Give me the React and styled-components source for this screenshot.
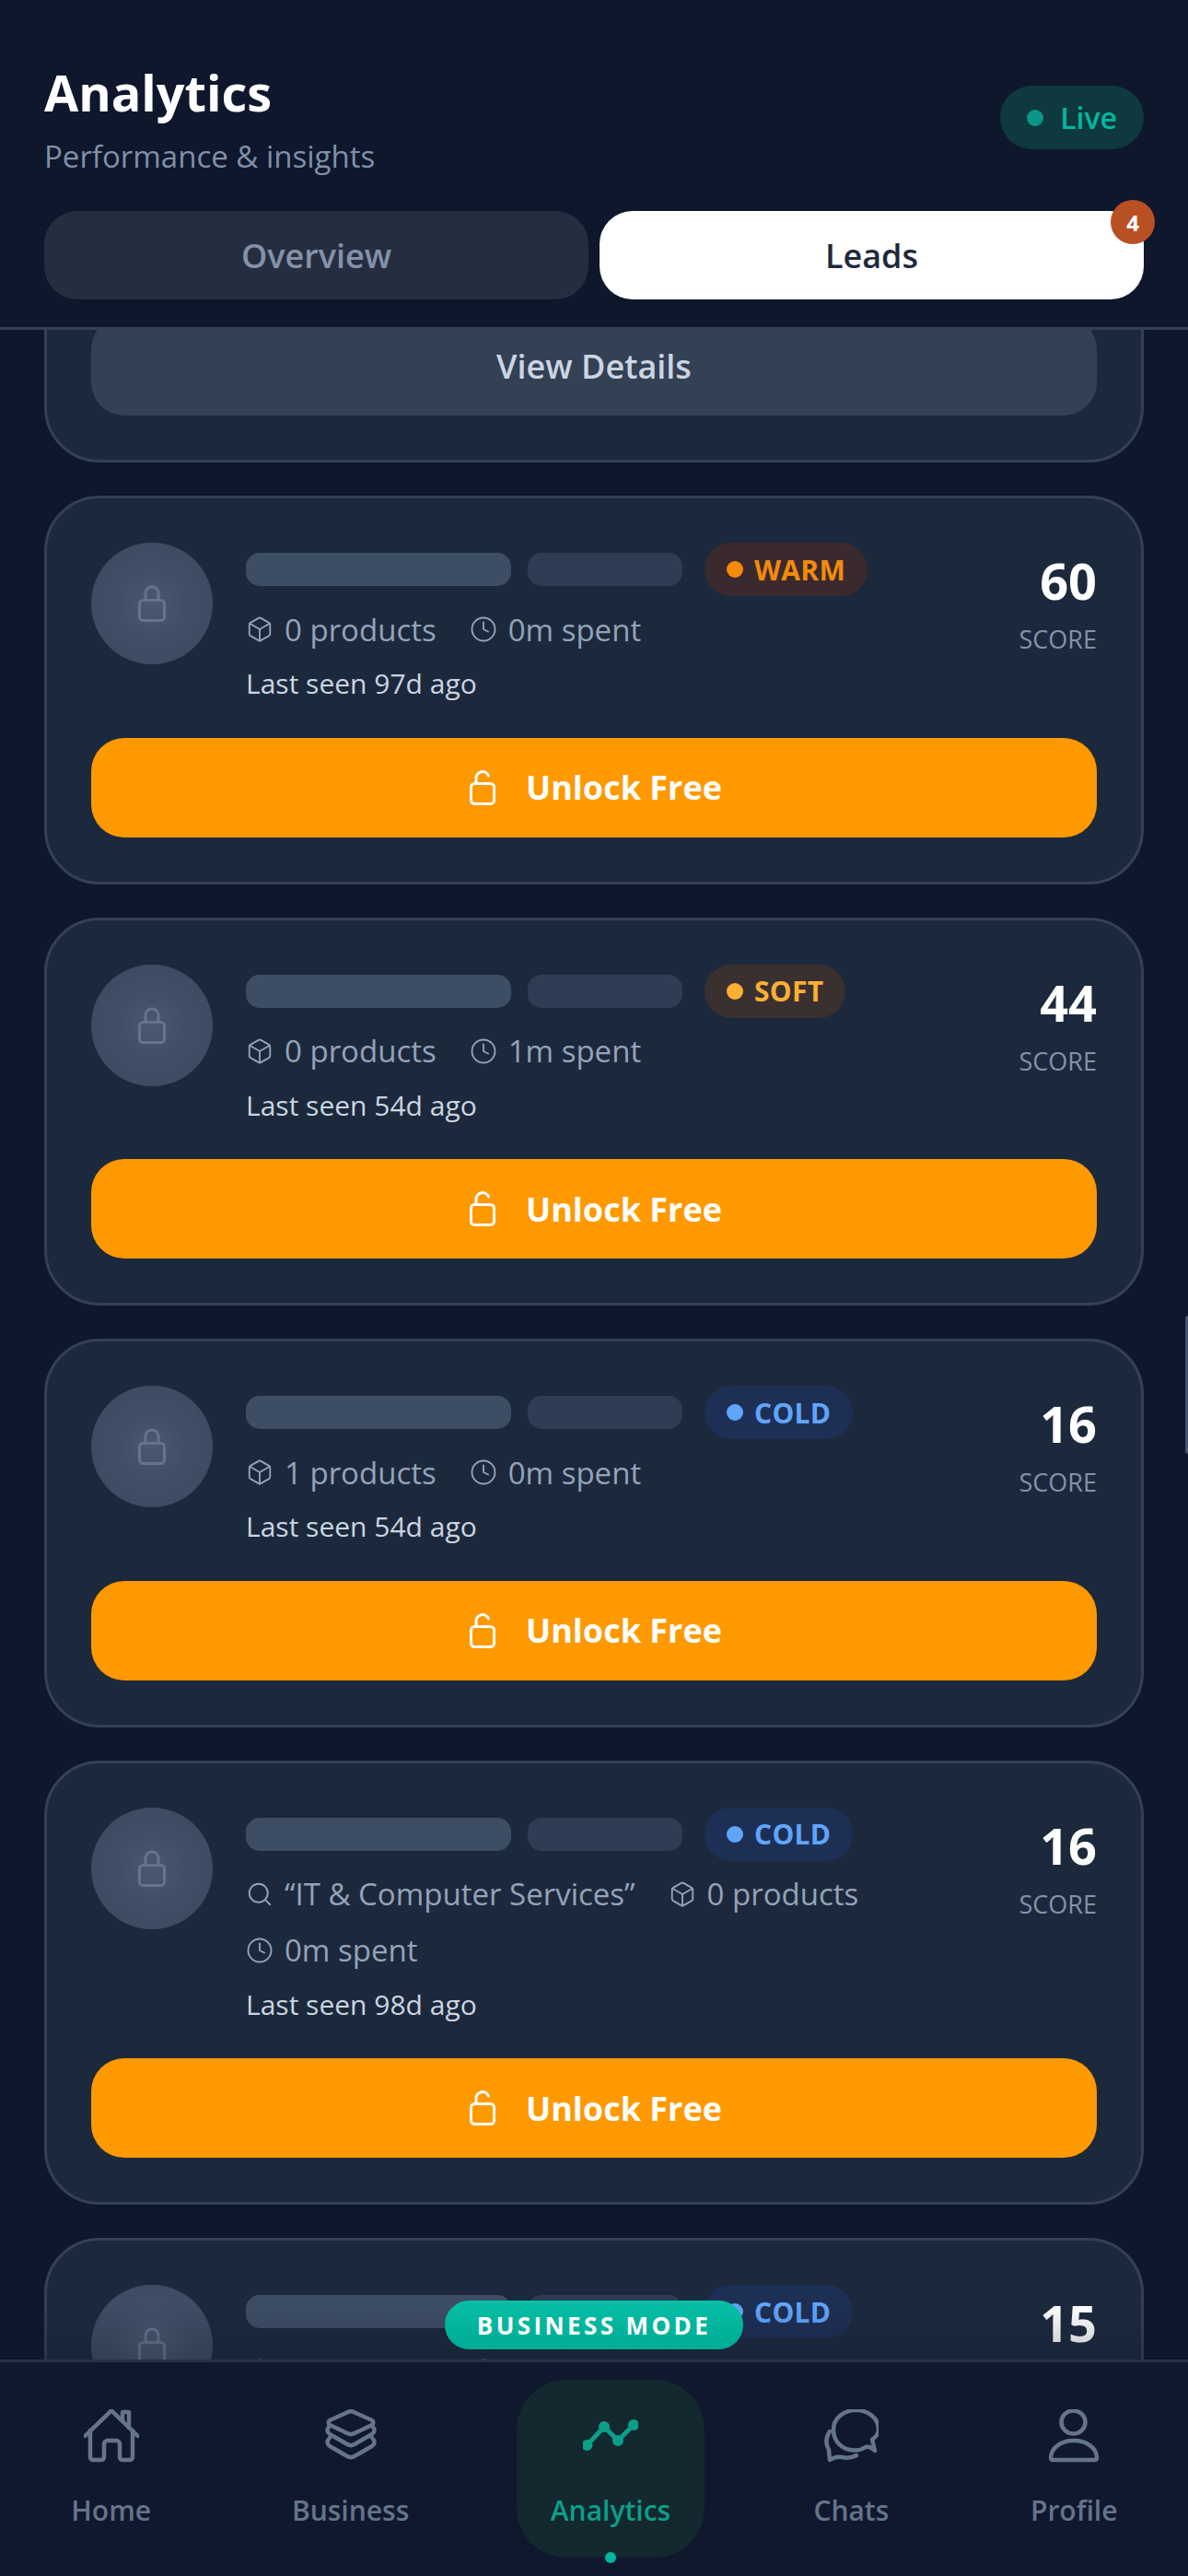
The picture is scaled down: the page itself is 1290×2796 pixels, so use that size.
import React from "react";
import styled, { createGlobalStyle } from "styled-components";
import { Box, Clock, Search } from "lucide-react";

const GlobalStyle = createGlobalStyle`
    html, body {
        margin: 0;
        padding: 0;
        background: #0f172a;
    }
    * {
        box-sizing: border-box;
    }
`;

const Screen = styled.div`
    position: relative;
    width: 1290px;
    height: 2796px;
    display: flex;
    flex-direction: column;
    overflow: hidden;
    background: #0e172c;
    font-family: "Open Sans", "Noto Sans", sans-serif;
`;

const Header = styled.header`
    flex: none;
    height: 358px;
    padding: 70px 48px 0;
    border-bottom: 3px solid #334155;
    background: #0e172c;
    position: relative;
    z-index: 2;
`;

const HeaderTop = styled.div`
    display: flex;
    justify-content: space-between;
    align-items: flex-start;
    height: 159px;
`;

const Title = styled.h1`
    margin: 0;
    font-size: 54px;
    line-height: 60px;
    font-weight: 700;
    color: #fff;
`;

const Subtitle = styled.p`
    margin: 17px 0 0;
    font-size: 33px;
    line-height: 46px;
    color: #8090a6;
`;

const LivePill = styled.div`
    display: flex;
    align-items: center;
    gap: 18px;
    height: 69px;
    margin-top: 23px;
    padding: 0 29px;
    border-radius: 35px;
    background: #0e393e;
    color: #00b8a0;
    font-size: 32px;
    font-weight: 600;
`;

const LiveDot = styled.span`
    width: 18px;
    height: 18px;
    border-radius: 50%;
    background: #0d9488;
`;

const Tabs = styled.div`
    display: grid;
    grid-template-columns: 1fr 1fr;
    gap: 12px;
`;

const Tab = styled.div`
    position: relative;
    height: 96px;
    display: flex;
    align-items: center;
    justify-content: center;
    border-radius: 36px;
    font-size: 36px;
    font-weight: 600;
    background: ${(p) => (p.$active ? "#fff" : "#252e40")};
    color: ${(p) => (p.$active ? "#1e293b" : "#8492a8")};
`;

const TabBadge = styled.span`
    position: absolute;
    top: -12px;
    right: -12px;
    width: 48px;
    height: 48px;
    border-radius: 50%;
    display: flex;
    align-items: center;
    justify-content: center;
    background: #b85024;
    color: #fff;
    font-size: 24px;
    font-weight: 700;
`;

const Main = styled.main`
    position: relative;
    flex: 1;
    min-height: 0;
    overflow: hidden;
    &::after {
        content: "";
        position: absolute;
        left: 0;
        right: 0;
        bottom: 0;
        height: 60px;
        background: linear-gradient(rgba(15, 23, 42, 0), rgba(15, 23, 42, 0.25));
    }
`;

const List = styled.div`
    display: flex;
    flex-direction: column;
    gap: 36px;
    padding: 0 48px;
    margin-top: -66px;
`;

const Card = styled.section`
    border: 3px solid #334155;
    border-radius: 60px;
    background: #1c293c;
    padding: 48px;
`;

const CardTop = styled.div`
    display: flex;
    align-items: flex-start;
    gap: 36px;
    margin-bottom: 37.5px;
`;

const Avatar = styled.div`
    flex: none;
    width: 132px;
    height: 132px;
    border-radius: 50%;
    display: flex;
    align-items: center;
    justify-content: center;
    color: #64748b;
    background: radial-gradient(circle, #4a5970 0%, #3f4e65 42%, #3b4a61 100%);
`;

const Info = styled.div`
    flex: 1;
    min-width: 0;
`;

const NameRow = styled.div`
    display: flex;
    align-items: center;
    gap: 18px;
    height: 58px;
    margin-bottom: 13px;
`;

const Bar = styled.div`
    height: 36px;
    width: ${(p) => p.$width}px;
    border-radius: 15px;
    background: ${(p) => p.$color};
`;

const Temp = styled.div`
    display: flex;
    align-items: center;
    gap: 12px;
    height: 58px;
    margin-left: 6px;
    padding: 0 24px;
    border-radius: 29px;
    font-size: 30px;
    font-weight: 700;
    letter-spacing: 0.3px;
    background: ${(p) => p.$bg};
    color: ${(p) => p.$color};
`;

const TempDot = styled.span`
    width: 18px;
    height: 18px;
    border-radius: 50%;
    background: currentColor;
`;

const MetaRow = styled.div`
    display: flex;
    flex-wrap: wrap;
    gap: 15px 36px;
    color: #94a3b8;
`;

const Meta = styled.div`
    display: flex;
    align-items: center;
    gap: 12px;
    height: 46px;
    font-size: 33px;
`;

const LastSeen = styled.div`
    margin-top: 15px;
    height: 42px;
    line-height: 42px;
    font-size: 30px;
    color: #cbd5e1;
`;

const Score = styled.div`
    flex: none;
    text-align: right;
    padding-top: 6px;
`;

const ScoreValue = styled.div`
    font-size: 54px;
    line-height: 70px;
    font-weight: 700;
    color: #fff;
`;

const ScoreLabel = styled.div`
    margin-top: 11px;
    font-size: 27px;
    line-height: 36px;
    color: #8492a8;
`;

const UnlockButton = styled.div`
    height: 108px;
    display: flex;
    align-items: center;
    justify-content: center;
    gap: 33px;
    padding-left: 4px;
    border-radius: 36px;
    background: #ff9900;
    color: #fff;
    font-size: 36px;
    font-weight: 700;
`;

const DetailsButton = styled.div`
    height: 108px;
    display: flex;
    align-items: center;
    justify-content: center;
    border-radius: 36px;
    background: #334155;
    color: #cbd5e1;
    font-size: 36px;
    font-weight: 600;
`;

const ModePill = styled.div`
    position: absolute;
    left: 483px;
    top: 2497px;
    z-index: 3;
    width: 324px;
    height: 53px;
    display: flex;
    align-items: center;
    justify-content: center;
    border-radius: 27px;
    background: linear-gradient(#06bfa6, #00ab94);
    color: #fff;
    font-size: 26px;
    font-weight: 700;
    letter-spacing: 3.4px;
    white-space: nowrap;
`;

const EdgeHandle = styled.div`
    position: absolute;
    right: 0;
    top: 1428px;
    width: 3px;
    height: 150px;
    border-radius: 3px 0 0 3px;
    background: #46536a;
`;

const Nav = styled.nav`
    position: relative;
    z-index: 2;
    flex: none;
    height: 235px;
    display: flex;
    justify-content: space-around;
    align-items: flex-start;
    padding-top: 19px;
    border-top: 3px solid #263246;
    background: #10182d;
`;

const NavItem = styled.div`
    position: relative;
    width: ${(p) => p.$width}px;
    height: 193px;
    display: flex;
    flex-direction: column;
    align-items: center;
    padding-top: 32px;
    border-radius: 54px;
    background: ${(p) => (p.$active ? "#13282f" : "transparent")};
    color: ${(p) => (p.$active ? "#0d9e8a" : "#64748b")};
`;

const NavIcon = styled.svg`
    width: 60px;
    height: 60px;
    fill: none;
    stroke: currentColor;
    stroke-width: 4.5;
    stroke-linecap: round;
    stroke-linejoin: round;
`;

const NavLabel = styled.span`
    margin-top: 29px;
    font-size: 30px;
    line-height: 42px;
    font-weight: 600;
`;

const NavDot = styled.span`
    position: absolute;
    left: 50%;
    bottom: -6px;
    width: 12px;
    height: 12px;
    margin-left: -6px;
    border-radius: 50%;
    background: #00b8a0;
`;

const LockedIcon = () => (
    <svg width="30" height="40" viewBox="0 0 30 40" fill="none" stroke="currentColor" strokeWidth="3" strokeLinecap="round">
        <rect x="1.5" y="16.5" width="27" height="22" rx="4" />
        <path d="M8 16V9a7 7 0 0 1 14 0v7" />
    </svg>
);

const OpenLockIcon = () => (
    <svg width="28" height="38" viewBox="0 0 28 38" fill="none" stroke="#fff" strokeWidth="3" strokeLinecap="round">
        <rect x="1.5" y="14.5" width="25" height="22" rx="4" />
        <path d="M7 14V8.500a7 7 0 0 1 13.500-2.500" />
    </svg>
);

const TEMPS = {
    WARM: { color: "#f58a0b", bg: "#3a2a2e" },
    SOFT: { color: "#fbb034", bg: "#3a3030" },
    COLD: { color: "#60a5fa", bg: "#1e2f55" },
};

const ICONS = { search: Search, box: Box, clock: Clock };

const LeadCard = ({ temp, score, meta, seen }) => (
    <Card>
        <CardTop>
            <Avatar>
                <LockedIcon />
            </Avatar>
            <Info>
                <NameRow>
                    <Bar $width={288} $color="#3d4d64" />
                    <Bar $width={168} $color="#2e3d54" />
                    <Temp $color={TEMPS[temp].color} $bg={TEMPS[temp].bg}>
                        <TempDot />
                        {temp}
                    </Temp>
                </NameRow>
                <MetaRow>
                    {meta.map(([icon, text]) => {
                        const Icon = ICONS[icon];
                        return (
                            <Meta key={text}>
                                <Icon size={30} strokeWidth={1.5} />
                                {text}
                            </Meta>
                        );
                    })}
                </MetaRow>
                {seen && <LastSeen>{seen}</LastSeen>}
            </Info>
            <Score>
                <ScoreValue>{score}</ScoreValue>
                <ScoreLabel>SCORE</ScoreLabel>
            </Score>
        </CardTop>
        <UnlockButton>
            <OpenLockIcon />
            Unlock Free
        </UnlockButton>
    </Card>
);

const leads = [
    { temp: "WARM", score: 60, seen: "Last seen 97d ago", meta: [["box", "0 products"], ["clock", "0m spent"]] },
    { temp: "SOFT", score: 44, seen: "Last seen 54d ago", meta: [["box", "0 products"], ["clock", "1m spent"]] },
    { temp: "COLD", score: 16, seen: "Last seen 54d ago", meta: [["box", "1 products"], ["clock", "0m spent"]] },
    {
        temp: "COLD",
        score: 16,
        seen: "Last seen 98d ago",
        meta: [["search", "“IT & Computer Services”"], ["box", "0 products"], ["clock", "0m spent"]],
    },
    { temp: "COLD", score: 15, seen: "Last seen 98d ago", meta: [["box", "0 products"], ["clock", "0m spent"]] },
];

export default function App() {
    return (
        <Screen>
            <GlobalStyle />
            <Header>
                <HeaderTop>
                    <div>
                        <Title>Analytics</Title>
                        <Subtitle>Performance &amp; insights</Subtitle>
                    </div>
                    <LivePill>
                        <LiveDot />
                        Live
                    </LivePill>
                </HeaderTop>
                <Tabs>
                    <Tab>Overview</Tab>
                    <Tab $active>
                        Leads
                        <TabBadge>4</TabBadge>
                    </Tab>
                </Tabs>
            </Header>
            <Main>
                <List>
                    <Card>
                        <DetailsButton>View Details</DetailsButton>
                    </Card>
                    {leads.map((lead, i) => (
                        <LeadCard key={i} {...lead} />
                    ))}
                </List>
            </Main>
            <ModePill>BUSINESS MODE</ModePill>
            <EdgeHandle />
            <Nav>
                <NavItem $width={159}>
                    <NavIcon viewBox="0 0 60 60">
                        <path d="M1.500 29L30 1.500L58.500 29" />
                        <path d="M7 23V52a3 3 0 0 0 3 3H19a3 3 0 0 0 3-3V38a4 4 0 0 1 4-4h9a4 4 0 0 1 4 4V52a3 3 0 0 0 3 3h8a3 3 0 0 0 3-3V23" />
                        <path d="M42 13V4a1 1 0 0 1 1-1h5a1 1 0 0 1 1 1V20" />
                    </NavIcon>
                    <NavLabel>Home</NavLabel>
                </NavItem>
                <NavItem $width={196}>
                    <NavIcon viewBox="0 0 60 60">
                        <path d="M26 3.500a8 8 0 0 1 8 0L53 12a3 3 0 0 1 0 5L34 26a8 8 0 0 1-8 0L7 17a3 3 0 0 1 0-5Z" />
                        <path d="M7 18Q2 23 7 27L26 38a8 8 0 0 0 8 0L53 27Q58 23 53 18" />
                        <path d="M7 31Q2 36 7 40L26 51a8 8 0 0 0 8 0L53 40Q58 36 53 31" />
                    </NavIcon>
                    <NavLabel>Business</NavLabel>
                </NavItem>
                <NavItem $width={204} $active>
                    <NavIcon viewBox="0 0 60 60">
                        <path d="M4.500 39L23 19L38 34L55 17" strokeWidth="5" />
                        <g fill="currentColor" stroke="none">
                            <circle cx="4.500" cy="39" r="6" />
                            <circle cx="23" cy="19" r="6" />
                            <circle cx="38" cy="34" r="6" />
                            <circle cx="55" cy="17" r="6" />
                        </g>
                    </NavIcon>
                    <NavLabel>Analytics</NavLabel>
                    <NavDot />
                </NavItem>
                <NavItem $width={154}>
                    <NavIcon viewBox="0 0 60 60" strokeWidth="4">
                        <path d="M53 33L56 45Q51 40 46 41Q40 45 34 44.500C18 44 11 33 11 22C11 10 22 1 35.600 1C49 1 60 10 60 22C60 26 57 30 53 33Z" />
                        <path d="M7 24C3 30 2 37 6 44L7 55Q14 51 20 52Q29 54 36 50" />
                    </NavIcon>
                    <NavLabel>Chats</NavLabel>
                </NavItem>
                <NavItem $width={165}>
                    <NavIcon viewBox="0 0 60 60">
                        <ellipse cx="29.500" cy="14" rx="13" ry="12.500" />
                        <path d="M5 53C5 42 16 34 30 34C44 34 55 42 55 53a2 2 0 0 1-2 2H7a2 2 0 0 1-2-2Z" />
                    </NavIcon>
                    <NavLabel>Profile</NavLabel>
                </NavItem>
            </Nav>
        </Screen>
    );
}
